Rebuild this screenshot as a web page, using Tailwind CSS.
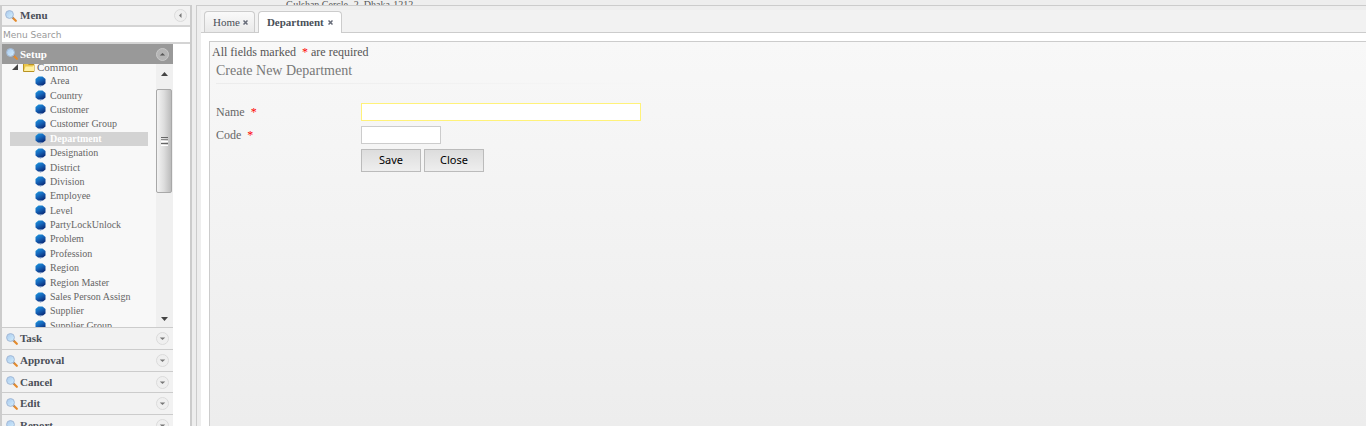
<!DOCTYPE html>
<html lang="en">
<head>
<meta charset="utf-8">
<title>Department</title>
<script src="https://cdn.jsdelivr.net/npm/@tailwindcss/browser@4"></script>
</head>
<body class="flex h-screen flex-col overflow-hidden bg-[#eeeeee] font-['Georgia','Liberation_Serif',serif] text-[#666666]">
<svg class="absolute size-0">
  <defs>
    <linearGradient id="ball" x1="0" y1="0" x2="0.6" y2="1"><stop offset="0" stop-color="#1d9be0"/><stop offset=".5" stop-color="#1668bd"/><stop offset="1" stop-color="#0b2f7c"/></linearGradient>
    <linearGradient id="lens" x1="0" y1="0" x2="1" y2="1"><stop offset="0" stop-color="#a9c9ee"/><stop offset="1" stop-color="#d4f0fd"/></linearGradient>
    <symbol id="dot" viewBox="0 0 11 11"><path d="M3.500 .5h4L10.500 3v4.500L8 9.500H3L.5 7.500V3z" fill="url(#ball)"/><path d="M3 9.500h5l-2.500 1z" fill="#5d83bb"/></symbol>
    <symbol id="glass" viewBox="0 0 12 12"><path d="M7.500 7.500l3.300 3.300" stroke="#e58a2b" stroke-width="2.200" stroke-linecap="round"/><path d="M7 7l1.300 1.300" stroke="#8a8a94" stroke-width="1.500"/><circle cx="4.500" cy="4.500" r="3.900" fill="url(#lens)" stroke="#a3b9d6" stroke-width="1"/></symbol>
    <symbol id="down" viewBox="0 0 13 13"><circle cx="6.500" cy="6.500" r="6" fill="#efefef" stroke="#dadada"/><path d="M3.800 5.500h5.400L6.500 8z" fill="#777"/></symbol>
  </defs>
</svg>

<header class="h-[5px] shrink-0 overflow-hidden pl-[286px] text-[10px] leading-[9px] whitespace-nowrap text-[#555555]">Gulshan Cercle -2, Dhaka-1212</header>

<div class="flex min-h-0 flex-1">
  <aside class="flex w-48 shrink-0 flex-col border-t border-r-2 border-l-2 border-[#cccccc] bg-white">
    <div class="flex h-[19px] shrink-0 items-center bg-[#f2f2f2] pr-[3px] pl-[3px]">
      <svg class="size-3"><use href="#glass"/></svg>
      <h2 class="ml-[3px] flex-1 text-[11px] font-bold text-[#4a4f58]">Menu</h2>
      <button class="size-[13px]" aria-label="Collapse menu"><svg class="size-full" viewBox="0 0 13 13"><circle cx="6.500" cy="6.500" r="6" fill="#efefef" stroke="#dadada"/><path d="M7.500 4v5L5 6.500z" fill="#777"/></svg></button>
    </div>
    <input class="h-[19px] w-full shrink-0 border-y-2 border-[#d4d4d4] bg-white pl-px font-['Tahoma','DejaVu_Sans',sans-serif] text-[9px] outline-none placeholder:text-[#999999]" type="text" aria-label="Menu Search" placeholder="Menu Search">
    <nav class="mr-[17px] flex min-h-0 flex-1 flex-col text-[11px] text-[#4a4f58]">
      <button class="flex h-5 shrink-0 items-center bg-[#999999] px-1 text-left font-bold text-white">
        <svg class="size-3"><use href="#glass"/></svg><span class="ml-0.5 flex-1">Setup</span>
        <svg class="size-[13px]" viewBox="0 0 13 13"><circle cx="6.500" cy="6.500" r="6" fill="#b5b5b5" stroke="#c8c8c8"/><path d="M3.800 7.500h5.400L6.500 5z" fill="#555"/></svg>
      </button>
      <div class="flex h-[264px] shrink-0 overflow-hidden border-b border-[#cccccc] bg-[#f8f8f8] text-[#666666]">
        <div class="flex-1 px-2">
          <div class="-mt-1 flex h-3.5 items-center">
            <svg class="mr-[5px] ml-0.5 size-[6px]" viewBox="0 0 6 6"><path d="M6 0v6H0z" fill="#444"/></svg>
            <svg class="h-2.5 w-3" viewBox="0 0 12 10"><path d="M.5 9.500V1.500h4l1 1h5.500v7z" fill="#eac54b" stroke="#b99322"/><path d="M1 9L2.500 4.500h7L11 3v6z" fill="#fff0a1"/></svg>
            <span class="ml-[2px]">Common</span>
          </div>
          <ul class="grid h-[259px] auto-rows-fr text-[10px] leading-[14px] whitespace-nowrap">
            <li><a href="#" class="flex h-full items-center gap-1 pl-[25px]"><svg class="size-[11px]"><use href="#dot"/></svg>Area</a></li>
            <li><a href="#" class="flex h-full items-center gap-1 pl-[25px]"><svg class="size-[11px]"><use href="#dot"/></svg>Country</a></li>
            <li><a href="#" class="flex h-full items-center gap-1 pl-[25px]"><svg class="size-[11px]"><use href="#dot"/></svg>Customer</a></li>
            <li><a href="#" class="flex h-full items-center gap-1 pl-[25px]"><svg class="size-[11px]"><use href="#dot"/></svg>Customer Group</a></li>
            <li><a href="#" aria-current="page" class="flex h-full items-center gap-1 bg-[#d3d3d3] pl-[25px] font-bold text-white"><svg class="size-[11px]"><use href="#dot"/></svg>Department</a></li>
            <li><a href="#" class="flex h-full items-center gap-1 pl-[25px]"><svg class="size-[11px]"><use href="#dot"/></svg>Designation</a></li>
            <li><a href="#" class="flex h-full items-center gap-1 pl-[25px]"><svg class="size-[11px]"><use href="#dot"/></svg>District</a></li>
            <li><a href="#" class="flex h-full items-center gap-1 pl-[25px]"><svg class="size-[11px]"><use href="#dot"/></svg>Division</a></li>
            <li><a href="#" class="flex h-full items-center gap-1 pl-[25px]"><svg class="size-[11px]"><use href="#dot"/></svg>Employee</a></li>
            <li><a href="#" class="flex h-full items-center gap-1 pl-[25px]"><svg class="size-[11px]"><use href="#dot"/></svg>Level</a></li>
            <li><a href="#" class="flex h-full items-center gap-1 pl-[25px]"><svg class="size-[11px]"><use href="#dot"/></svg>PartyLockUnlock</a></li>
            <li><a href="#" class="flex h-full items-center gap-1 pl-[25px]"><svg class="size-[11px]"><use href="#dot"/></svg>Problem</a></li>
            <li><a href="#" class="flex h-full items-center gap-1 pl-[25px]"><svg class="size-[11px]"><use href="#dot"/></svg>Profession</a></li>
            <li><a href="#" class="flex h-full items-center gap-1 pl-[25px]"><svg class="size-[11px]"><use href="#dot"/></svg>Region</a></li>
            <li><a href="#" class="flex h-full items-center gap-1 pl-[25px]"><svg class="size-[11px]"><use href="#dot"/></svg>Region Master</a></li>
            <li><a href="#" class="flex h-full items-center gap-1 pl-[25px]"><svg class="size-[11px]"><use href="#dot"/></svg>Sales Person Assign</a></li>
            <li><a href="#" class="flex h-full items-center gap-1 pl-[25px]"><svg class="size-[11px]"><use href="#dot"/></svg>Supplier</a></li>
            <li><a href="#" class="flex h-full items-center gap-1 pl-[25px]"><svg class="size-[11px]"><use href="#dot"/></svg>Supplier Group</a></li>
          </ul>
        </div>
        <div class="flex w-[17px] flex-col bg-[#f0f0f0]">
          <svg class="mx-auto mt-2 h-1 w-[7px] shrink-0" viewBox="0 0 7 4"><path d="M0 4h7L3.500 0z" fill="#444"/></svg>
          <div class="mt-[13px] mr-px flex h-[104px] flex-col items-center justify-center gap-px rounded-xs border border-[#a8a8a8] bg-linear-to-r from-[#f3f3f3] via-[#dddddd] to-[#bcbcbc]">
            <i class="h-px w-[7px] bg-[#666666]"></i><i class="h-px w-[7px] bg-[#888888]"></i><i class="h-px w-[7px] bg-white"></i><i class="h-px w-[7px] bg-[#666666]"></i><i class="h-px w-[7px] bg-white"></i>
          </div>
          <svg class="mx-auto mt-auto mb-1.5 h-1 w-[7px] shrink-0" viewBox="0 0 7 4"><path d="M0 0h7L3.500 4z" fill="#444"/></svg>
        </div>
      </div>
      <button class="flex h-[22px] shrink-0 items-center border-b border-[#cccccc] bg-[#f2f2f2] px-1 text-left font-bold"><svg class="size-3"><use href="#glass"/></svg><span class="ml-0.5 flex-1">Task</span><svg class="size-[13px]"><use href="#down"/></svg></button>
      <button class="flex h-[22px] shrink-0 items-center border-b border-[#cccccc] bg-[#f2f2f2] px-1 text-left font-bold"><svg class="size-3"><use href="#glass"/></svg><span class="ml-0.5 flex-1">Approval</span><svg class="size-[13px]"><use href="#down"/></svg></button>
      <button class="flex h-[21px] shrink-0 items-center border-b border-[#cccccc] bg-[#f2f2f2] px-1 text-left font-bold"><svg class="size-3"><use href="#glass"/></svg><span class="ml-0.5 flex-1">Cancel</span><svg class="size-[13px]"><use href="#down"/></svg></button>
      <button class="flex h-[22px] shrink-0 items-center border-b border-[#cccccc] bg-[#f2f2f2] px-1 text-left font-bold"><svg class="size-3"><use href="#glass"/></svg><span class="ml-0.5 flex-1">Edit</span><svg class="size-[13px]"><use href="#down"/></svg></button>
      <button class="flex h-[22px] shrink-0 items-center border-b border-[#cccccc] bg-[#f2f2f2] px-1 text-left font-bold"><svg class="size-3"><use href="#glass"/></svg><span class="ml-0.5 flex-1">Report</span><svg class="size-[13px]"><use href="#down"/></svg></button>
    </nav>
  </aside>

  <main class="ml-1 flex min-w-0 flex-1 flex-col border-t border-l border-[#cccccc] pt-1 pl-1">
    <div class="flex h-[23px] shrink-0 items-end gap-[3px] border-b border-[#cccccc] bg-[#f2f2f2] pl-[3px] text-[11px] text-[#4a4f58]">
      <button class="flex h-[21px] items-center gap-[3px] rounded-t border border-b-0 border-[#cccccc] bg-linear-to-b from-[#fafafa] to-[#e9e9e9] pr-1.5 pl-2">Home<svg class="size-[5px]" viewBox="0 0 5 5"><path d="M.5 .5l4 4M4.500 .5l-4 4" stroke="#666b78" stroke-width="1.500"/></svg></button>
      <button class="-mb-px flex h-[22px] items-center gap-1 rounded-t border border-b-0 border-[#cccccc] bg-white px-2 font-bold">Department<svg class="size-[5px]" viewBox="0 0 5 5"><path d="M.5 .5l4 4M4.500 .5l-4 4" stroke="#666b78" stroke-width="1.500"/></svg></button>
    </div>
    <div class="flex flex-1 bg-white pt-2 pl-2">
      <form class="flex-1 border-t border-l border-[#cccccc] bg-linear-to-b from-[#f8f8f8] to-[#ededed] pt-0.5 pl-0.5">
        <p class="text-[12px] leading-4 text-[#555555]">All fields marked&nbsp; <span class="text-[#ff0000]">*</span> are required</p>
        <div class="pt-px pl-1">
          <h1 class="h-[22px] w-[444px] text-[14px] leading-5 text-[#777777]">Create New Department</h1>
          <div class="h-px w-[444px] bg-linear-to-r from-[#ececec] to-transparent"></div>
          <div class="mt-[19px] grid grid-cols-[145px_280px] gap-y-[5px] text-[12px]">
            <label for="name" class="leading-[18px]">Name&nbsp; <span class="text-[#ff0000]">*</span></label>
            <input id="name" type="text" class="h-[18px] w-full border border-[#fff27a] bg-white px-1 outline-none">
            <label for="code" class="leading-[18px]">Code&nbsp; <span class="text-[#ff0000]">*</span></label>
            <input id="code" type="text" class="h-[18px] w-20 border border-[#cccccc] bg-white px-1 outline-none">
            <div class="col-start-2 flex gap-[3px] font-['Tahoma','Noto_Sans',sans-serif] text-[11px] text-black">
              <button type="button" class="h-[23px] w-[60px] border border-[#bbbbbb] bg-linear-to-b from-[#dddddd] to-[#eeeeee]">Save</button>
              <button type="button" class="h-[23px] w-[60px] border border-[#bbbbbb] bg-linear-to-b from-[#dddddd] to-[#eeeeee]">Close</button>
            </div>
          </div>
        </div>
      </form>
    </div>
  </main>
</div>
</body>
</html>
